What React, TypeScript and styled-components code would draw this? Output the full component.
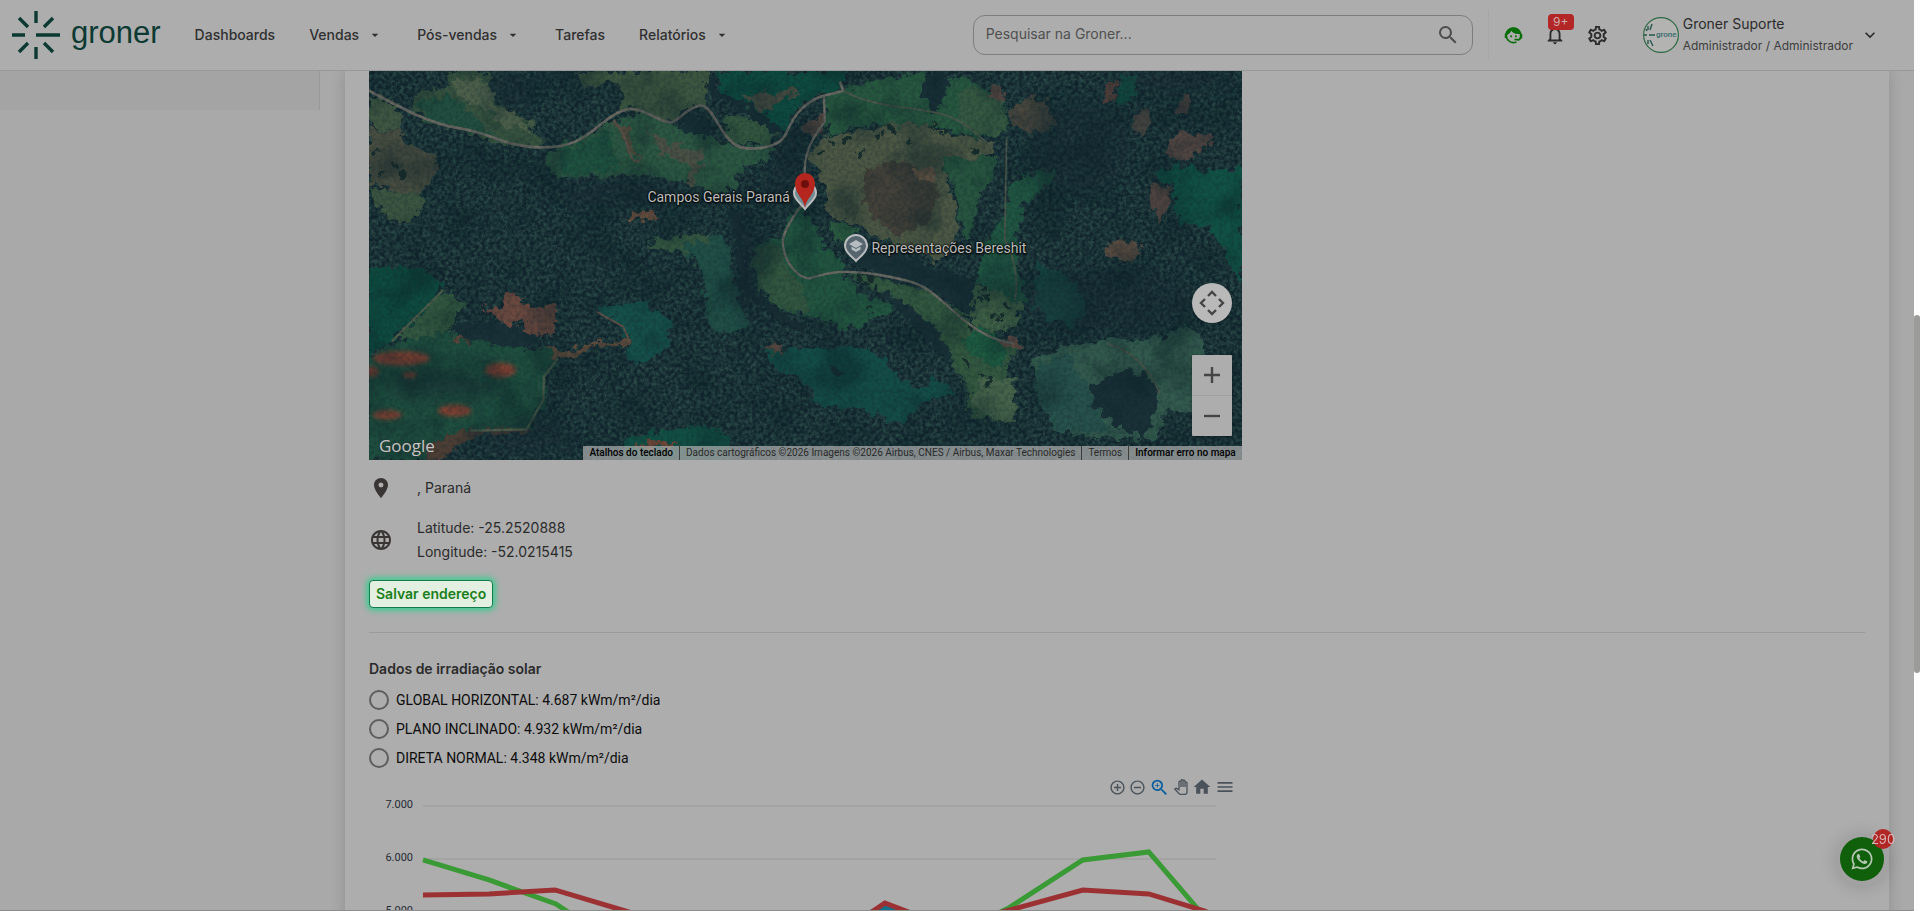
import React from "react";
import styled, { createGlobalStyle } from "styled-components";
import {
  MdAddCircleOutline,
  MdArrowDropDown,
  MdExpandMore,
  MdHome,
  MdLanguage,
  MdMenu,
  MdNotificationsNone,
  MdOutlinePanTool,
  MdOutlineSettings,
  MdPlace,
  MdRemoveCircleOutline,
  MdSearch,
  MdZoomIn,
} from "react-icons/md";
import { FaWhatsapp } from "react-icons/fa";

const c = {
  surface: "#adadad",
  page: "#a9a9a9",
  line: "#989898",
  text: "#2b2b2b",
  muted: "#4a4a4a",
  brand: "#0c3a33",
  green: "#117a11",
  red: "#b32626",
};

const GlobalStyle = createGlobalStyle`
  *, *::before, *::after { box-sizing: border-box; }
  body {
    margin: 0;
    background: ${c.page};
    color: ${c.text};
    font: 400 14px/24px Inter, "Liberation Sans", sans-serif;
  }
  button { font: inherit; color: inherit; background: none; border: 0; padding: 0; cursor: pointer; }
`;

const Screen = styled.div`
  display: flex;
  height: 100vh;
  overflow: hidden;
`;

const Shell = styled.div`
  flex: 1;
  min-width: 0;
  display: flex;
  flex-direction: column;
  border-bottom: 1px solid #8c8c8c;
`;

const ScrollTrack = styled.div`
  flex: 0 0 6px;
  display: grid;
  grid-template-rows: 315fr 358fr 238fr;
  background: #fdfdfd;
`;

const ScrollThumb = styled.div`
  grid-row: 2;
  border-radius: 3px;
  background: #9b9b99;
`;

const Header = styled.header`
  flex: 0 0 71px;
  display: flex;
  align-items: center;
  padding: 0 34px 0 12px;
  background: ${c.surface};
  border-bottom: 1px solid ${c.line};
`;

const Logo = styled.a`
  display: flex;
  align-items: center;
  gap: 11px;
  margin-right: 34px;
  color: ${c.brand};
  font: 400 31px/40px "Liberation Sans", sans-serif;
  text-decoration: none;

  span { padding-bottom: 4px; }
`;

const Nav = styled.nav`
  display: flex;
  gap: 34px;
`;

const NavItem = styled.button`
  display: flex;
  align-items: center;
  gap: 8px;
  font-weight: 500;
  font-size: 14px;
  line-height: 24px;
  color: #303030;
`;

const SearchBox = styled.form`
  flex: 0 1 500px;
  display: flex;
  align-items: center;
  height: 40px;
  margin: 0 15px 0 auto;
  padding: 0 12px;
  border: 1px solid #7d7d7d;
  border-radius: 12px;
  color: #4d4d4d;

  input {
    flex: 1;
    min-width: 0;
    padding: 0 0 2px;
    border: 0;
    background: none;
    font: inherit;
    color: inherit;
    outline: 0;
  }
  input::placeholder { color: #505050; opacity: 1; }
  button { display: flex; }
`;

const Tools = styled.div`
  display: flex;
  align-items: center;
  gap: 20px;
  height: 50px;
  padding: 0 34px 0 14px;
  border-left: 1px solid #a6a6a6;
  color: ${c.text};
`;

const ToolButton = styled.button<{ $accent?: boolean }>`
  position: relative;
  display: flex;
  color: ${(p) => (p.$accent ? "#0a6e0a" : "inherit")};
`;

const CountBadge = styled.span`
  position: absolute;
  left: 4px;
  top: -10px;
  width: 26px;
  border-radius: 4px;
  background: ${c.red};
  color: #d0abab;
  font-size: 12px;
  line-height: 16px;
`;

const Profile = styled.button`
  display: flex;
  align-items: center;
  gap: 4px;
  text-align: left;

  > :last-child { margin-left: 3px; }
`;

const ProfileText = styled.span<{ $small?: boolean }>`
  display: block;
  font-size: ${(p) => (p.$small ? 12 : 14)}px;
  line-height: 22px;
  color: ${(p) => (p.$small ? "#3c3c3c" : c.text)};
`;

const Body = styled.div`
  flex: 1;
  min-height: 0;
  display: flex;
  overflow: hidden;
`;

const Sidebar = styled.aside`
  flex: 0 0 320px;
  height: 39px;
  background: #a4a4a4;
  border-right: 1px solid #999;
`;

const Card = styled.main`
  flex: 1;
  min-width: 0;
  height: max-content;
  margin: 0 25px;
  padding: 0 24px;
  background: ${c.surface};
  box-shadow: 0 0 14px rgba(0, 0, 0, 0.16);
`;

const Column = styled.div`
  width: 58.34%;
`;

const MapFrame = styled.section`
  position: relative;
  height: 389px;
  overflow: hidden;
  background: #1d3639;

  > svg { display: block; width: 100%; height: 100%; }
`;

const Place = styled.div<{ $dx: number; $top: number }>`
  position: absolute;
  left: calc(50% + ${(p) => p.$dx}px);
  top: ${(p) => p.$top}px;
  display: flex;
  align-items: center;
  gap: 2px;
  color: #bdbdbd;
  font: 400 14px/20px Roboto, sans-serif;
  white-space: nowrap;
  text-shadow: 0 0 2px #000, 0 0 2px #000, 0 1px 2px #000;
`;

const GoogleMark = styled.span`
  position: absolute;
  left: 10px;
  bottom: 2px;
  color: #c4c4c4;
  font: 500 17px/24px "Open Sans", sans-serif;
  text-shadow: 0 0 2px #333;
`;

const MapControls = styled.div`
  position: absolute;
  right: 10px;
  bottom: 24px;
  display: flex;
  flex-direction: column;
  gap: 32px;
`;

const ControlGroup = styled.div<{ $round?: boolean }>`
  width: 40px;
  border-radius: ${(p) => (p.$round ? "50%" : "1px")};
  background: ${(p) => (p.$round ? "#b9b9b9" : "#adadad")};
  box-shadow: 0 1px 3px rgba(0, 0, 0, 0.35);

  button { display: block; height: 40px; }
  button + button { border-top: 1px solid #a0a0a0; height: 41px; }
  svg { display: block; }
`;

const Attribution = styled.div`
  position: absolute;
  right: 0;
  bottom: 0;
  display: flex;
  background: rgba(173, 173, 173, 0.72);
  color: #2a2a2a;
  font: 400 10px/14px Roboto, sans-serif;
  white-space: nowrap;

  > * { padding: 0 6px; color: inherit; text-decoration: none; }
  > * + * { border-left: 1px solid #3c3c3c; }
  > :first-child, > :last-child { color: #000; font-weight: 500; }
`;

const InfoRow = styled.div<{ $tall?: boolean }>`
  display: flex;
  align-items: center;
  gap: 24px;
  min-height: ${(p) => (p.$tall ? 56 : 48)}px;

  svg { color: #393535; }
`;

const SaveButton = styled.button`
  display: block;
  height: 28px;
  margin-top: 16px;
  padding: 0 6px;
  border: 1px solid #16794c;
  border-radius: 4px;
  background: #e3efe1;
  box-shadow: 0 0 6px 2px #2cd08e;
  color: #1a7f1a;
  font-weight: 600;
  line-height: 24px;
`;

const Rule = styled.hr`
  margin: 24px 0;
  border: 0;
  border-top: 1px solid #9b9b9b;
`;

const RadioSet = styled.fieldset`
  margin: 0;
  padding: 0;
  border: 0;

  legend { padding: 0; margin-bottom: 4px; font-weight: 600; }
`;

const RadioRow = styled.label`
  display: flex;
  align-items: center;
  gap: 7px;
  height: 29px;
  color: #0c0c0c;
  font-family: Roboto, sans-serif;

  input {
    appearance: none;
    width: 20px;
    height: 20px;
    margin: 0;
    border: 2px solid #5e5e5e;
    border-radius: 50%;
  }
`;

const ChartTools = styled.div`
  display: flex;
  justify-content: flex-end;
  align-items: center;
  gap: 3px;
  height: 22px;
  margin-top: 4px;
  padding-right: 7px;
  color: #4a525a;
`;

const ChartButton = styled.button<{ $active?: boolean }>`
  display: flex;
  color: ${(p) => (p.$active ? "#0a5f9e" : "inherit")};
`;

const Plot = styled.svg`
  display: block;
  width: 100%;
  font-family: Roboto, sans-serif;
`;

const Whats = styled.button`
  position: fixed;
  right: 36px;
  bottom: 30px;
  display: grid;
  place-items: center;
  width: 44px;
  height: 44px;
  border-radius: 50%;
  background: #0f5f0b;
  color: #b5c7b3;
  box-shadow: 0 0 0 4px #a2a2a2, 0 2px 16px 6px rgba(0, 0, 0, 0.12);
`;

const WhatsCount = styled.span`
  position: absolute;
  right: -9px;
  top: -8px;
  display: flex;
  justify-content: center;
  width: 20px;
  height: 20px;
  border-radius: 50%;
  background: ${c.red};
  color: #d6b6b6;
  font-size: 13px;
  line-height: 20px;
`;

const Rays = ({ size }: { size: number }) => (
  <svg width={size} height={size} viewBox="0 0 48 48" stroke="currentColor" strokeWidth="3.4" fill="none" aria-hidden>
    <path d="M24 0V12M24 36V48M0 24H13M24 24H48M7 7L16 16M41 7L32 16M7 41L16 32M41 41L32 32" />
  </svg>
);

const Agent = () => (
  <svg width="21" height="21" viewBox="0 0 24 24" fill="currentColor" aria-hidden>
    <path d="M9.500 6.340C8.600 8.500 6.900 10.300 4.700 11.200L2.500 10.200C3.400 6 7 2.500 12 2.500C16.800 2.500 20.400 6 21.200 10.200H17C13.900 10.200 11.200 8.700 9.500 6.340Z" />
    <path d="M18.72,14.76C19.07,13.91 19.26,13 19.26,12C19.26,11.28 19.15,10.59 18.96,9.95C18.31,10.1 17.63,10.18 16.92,10.18C13.86,10.18 11.15,8.67 9.5,6.34C8.61,8.5 6.91,10.26 4.77,11.22C4.73,11.47 4.73,11.74 4.73,12A7.27,7.27 0 0,0 12,19.27C13.05,19.27 14.06,19.04 14.97,18.63C15.54,19.72 15.8,20.26 15.78,20.26C14.14,20.81 12.87,21.08 12,21.08C9.58,21.08 7.27,20.13 5.57,18.42C4.53,17.38 3.76,16.11 3.33,14.73H2V10.18H3.09C3.93,6.04 7.6,2.92 12,2.92C14.4,2.92 16.71,3.87 18.42,5.58C19.69,6.84 20.54,8.45 20.89,10.18H22V14.73H21.94L18.38,18L13.08,17.4V15.73H17.91L18.72,14.76M9.27,11.77A1.14,1.14 0 1,1 9.26,11.77M14.72,11.77A1.14,1.14 0 1,1 14.71,11.77Z" />
  </svg>
);

const Avatar = () => (
  <svg width="36" height="36" viewBox="0 0 36 36" aria-hidden>
    <circle cx="18" cy="18" r="17.4" fill="#b3b3b1" stroke="#2f6a45" strokeWidth="1.2" />
    <g stroke="#28564f" strokeWidth="1.4" fill="none">
      <path d="M5 9V13M5 23V27M1 18H4M6 18H12M9 7L7 13M10 29L7 23M3 12L4 14" />
    </g>
    <text x="13" y="20" fontSize="8" fontWeight="500" fontFamily="Roboto, sans-serif" fill="#35696b">grone</text>
  </svg>
);

/* Land cover painted over the forest base: [fill, outline]. */
const fields: [string, string][] = [
  ["#37533f", "M160 110L200 95L265 80L270 33L385 33L390 90L440 150L515 185L520 220L560 245L520 262L440 256L330 215L200 180L150 155Z"],
  ["#224f3f", "M165 125L260 105L330 150L400 230L300 205L200 175Z"],
  ["#4d604a", "M275 60L370 60L420 140L510 190L515 215L430 195L380 150L300 110Z"],
  ["#3f5742", "M27 105L80 120L135 160L125 215L27 200Z"],
  ["#494e41", "M27 205L120 215L140 255L235 285L225 340L190 400L150 410L50 370L27 390Z"],
  ["#3b5540", "M40 385L150 400L190 400L185 450L150 490L90 480L40 410Z"],
  ["#3c5640", "M640 33L1045 33L1035 130L1000 135L940 185L900 190L820 145L785 150L790 90L740 65L680 80Z"],
  ["#2c5742", "M550 275L600 262L690 220L745 185L850 160L930 195L1050 225L1100 255L1230 258L1245 270L1190 320L1150 320L1120 390L1040 400L1000 370L880 345L700 350L600 355L560 320Z"],
  ["#1f523f", "M600 280L740 215L780 320L680 345L610 340Z"],
  ["#4a5044", "M960 260L1030 270L1040 300L1000 340L1010 380L980 370L985 310L900 280L860 190L880 220Z"],
  ["#0e4a3f", "M1070 33L1470 33L1440 90L1380 100L1310 145L1280 210L1240 200L1150 150L1080 90Z"],
  ["#454b41", "M1155 115L1200 95L1250 100L1300 80L1315 95L1260 130L1230 160L1180 145Z"],
  ["#33563f", "M1100 165L1180 175L1250 225L1230 250L1130 250L1095 215Z"],
  ["#27573f", "M1395 100L1450 90L1520 65L1690 42L1840 60L1900 95L1940 130L1940 225L1850 230L1700 195L1550 190L1400 225Z"],
  ["#355841", "M1800 100L1830 75L1900 100L1940 150L1935 225L1840 225L1790 170Z"],
  ["#534640", "M1335 190L1385 170L1395 200L1370 230L1330 220Z"],
  ["#4c5744", "M1345 295L1390 230L1500 215L1600 190L1700 195L1770 225L1850 230L1900 255L1870 300L1750 300L1770 390L1790 480L1790 560L1730 600L1600 550L1500 500L1410 470L1390 350Z"],
  ["#434139", "M1515 330L1600 300L1700 330L1740 400L1690 500L1600 530L1515 450Z"],
  ["#6c5746", "M1655 335L1700 318L1730 340L1720 358L1670 355Z"],
  ["#27553f", "M1745 295L1910 290L1900 350L1860 400L1840 500L1820 540L1800 490L1780 380Z"],
  ["#205541", "M1960 360L2100 325L2050 390L1980 440L1970 540L1975 640L2010 740L1920 715L1850 660L1870 560L1930 480L1945 400Z"],
  ["#225540", "M1320 440L1290 460L1260 530L1180 560L1185 640L1200 690L1260 745L1350 770L1430 790L1450 820L1600 745L1510 700L1450 650L1445 590L1390 560L1360 490Z"],
  ["#32563f", "M1180 560L1270 560L1275 620L1330 690L1350 765L1250 740L1190 680Z"],
  ["#2b5a40", "M1405 500L1440 485L1490 510L1480 545L1430 545Z"],
  ["#33583f", "M1450 640L1600 665L1700 690L1770 735L1900 830L1980 850L1940 920L1960 1090L1850 1070L1820 1040L1830 1000L1760 880L1720 800L1660 740L1550 690Z"],
  ["#3e5f45", "M1850 670L1920 700L1990 740L1960 790L1900 830L1830 770Z"],
  ["#1d5a40", "M1850 800L1940 850L1930 920L1850 900L1800 850Z"],
  ["#46634a", "M1860 960L1960 960L1965 1090L1880 1075L1830 1040Z"],
  ["#16504a", "M710 745L760 730L850 720L890 750L935 790L930 850L840 920L800 890L815 850L770 790Z"],
  ["#214f46", "M855 555L930 530L1080 525L1110 560L1115 640L1140 740L1175 790L1080 830L1045 800L1030 660L1000 590L930 570Z"],
  ["#345640", "M855 555L930 530L1060 525L1040 545L960 550L990 580L930 570Z"],
  ["#144d47", "M1210 870L1340 870L1535 860L1620 960L1690 990L1720 945L1785 1000L1680 1030L1630 1095L1480 1040L1380 1040L1330 960L1250 930Z"],
  ["#194c45", "M2030 610L2110 640L2170 700L2180 760L2140 800L2070 780L2025 740Z"],
  ["#115245", "M2380 340L2450 310L2540 335L2646 320L2646 660L2615 640L2600 570L2540 500L2460 490L2440 380Z"],
  ["#335a4d", "M2015 910L2100 860L2250 835L2400 835L2480 800L2530 830L2540 1060L2420 1050L2380 1140L2200 1130L2080 1110L2040 1020Z"],
  ["#27514b", "M2020 930L2120 880L2180 980L2250 1120L2080 1110L2040 1020Z"],
  ["#145044", "M2260 120L2290 40L2330 45L2320 100L2290 140Z"],
  ["#0e4a3e", "M27 625L150 615L250 670L200 740L90 840L27 890Z"],
  ["#32573f", "M110 835L255 685L310 740L270 800L240 850Z"],
  ["#1f4e3e", "M90 850L270 820L400 860L550 865L595 895L550 950L550 1020L500 1110L330 1110L200 1200L27 1200L27 900Z"],
  ["#125044", "M790 1140L900 1110L1010 1095L1080 1110L1130 1170L1100 1200L780 1200Z"],
];

const soils: [string, string][] = [
  ["#6d4a40", "M365 745L430 745L440 695L475 700L500 745L580 735L585 800L570 830L505 825L490 775L455 805L420 770Z"],
  ["#6c503e", "M790 475L850 450L888 460L885 480L830 482Z"],
  ["#5c4a3c", "M550 862L640 870L700 845L810 840L812 858L700 855L650 895L600 900Z"],
  ["#5d463a", "M265 825L330 840L310 850L270 845Z"],
  ["#6c5148", "M1925 840L1970 832L1990 865L1950 870Z"],
  ["#54463e", "M1215 860L1270 850L1280 875L1240 885Z"],
  ["#524642", "M2405 270L2450 220L2560 220L2560 240L2500 290L2440 300Z"],
  ["#4e4340", "M2450 130L2480 95L2500 120L2480 165L2450 160Z"],
  ["#454440", "M2310 190L2345 150L2375 160L2350 230Z"],
  ["#4e433f", "M2370 380L2420 370L2435 430L2400 490L2370 440Z"],
  ["#584b41", "M2235 560L2270 535L2340 550L2335 590L2300 615L2250 580Z"],
  ["#4a483f", "M1945 150L1990 115L2055 120L2090 190L2010 225L1960 190Z"],
  ["#544641", "M1890 110L1910 70L1935 110L1930 140Z"],
  ["#533f3a", "M2235 120L2240 60L2265 70L2260 130Z"],
  ["#4d4a3d", "M765 190L800 260L840 300L820 240L790 190Z"],
  ["#4d3f35", "M200 1160L330 1105L510 1100L500 1118L340 1130L240 1200L200 1200Z"],
  ["#6b4537", "M830 1150L900 1140L980 1158L830 1160Z"],
];

const groves = [
  "M945 180L975 150L1035 175L1050 225L1000 225Z",
  "M1680 110L1705 40L1770 38L1755 120L1725 165Z",
  "M2190 980L2300 925L2375 960L2390 1020L2360 1140L2280 1100L2200 1040Z",
  "M270 795L400 780L500 810L550 850L430 862L310 840Z",
  "M1480 560L1640 590L1760 640L1850 660L1830 770L1770 720L1700 680L1560 640L1480 600Z",
  "M1540 690L1650 740L1720 800L1780 880L1760 900L1660 790Z",
  "M1410 930L1440 925L1460 945L1430 950Z",
];

/* Broad shaded valleys: cx, cy, rx, ry. */
const shades: [number, number, number, number][] = [
  [780, 405, 190, 50],
  [2160, 260, 160, 140],
  [2250, 720, 260, 100],
  [1280, 330, 60, 130],
  [500, 1130, 160, 50],
  [2440, 60, 200, 40],
  [450, 90, 70, 60],
  [260, 980, 190, 40],
  [1160, 620, 40, 180],
];

const reds: [number, number, number, number][] = [
  [125, 895, 85, 22],
  [422, 930, 46, 22],
  [82, 1065, 44, 14],
  [284, 1052, 50, 18],
  [35, 935, 22, 16],
  [150, 945, 22, 10],
];

const trees: [number, number][] = [
  [1870, 685], [1882, 712], [1905, 765], [1925, 770], [1945, 742], [1860, 718], [1830, 800], [1820, 912], [1860, 950], [1885, 968],
  [1420, 245], [1455, 240], [1500, 275], [1560, 225], [1600, 208], [1650, 240], [1720, 195], [1752, 218], [1840, 270], [1380, 280],
  [1500, 655], [1520, 668], [1535, 655], [1530, 750], [817, 155], [1090, 248], [110, 325], [60, 345], [130, 340], [50, 270],
];

const Satellite = () => (
  <svg viewBox="27 33 2619 1167" preserveAspectRatio="xMidYMid slice" aria-hidden>
    <defs>
      <filter id="rough" x="0" y="0" width="1" height="1" colorInterpolationFilters="sRGB">
        <feTurbulence type="fractalNoise" baseFrequency="0.035" numOctaves="4" seed="4" />
        <feDisplacementMap in="SourceGraphic" scale="48" xChannelSelector="R" yChannelSelector="G" />
      </filter>
      <filter id="canopy" x="0" y="0" width="1" height="1" colorInterpolationFilters="sRGB">
        <feTurbulence type="fractalNoise" baseFrequency="0.09" numOctaves="3" seed="9" />
        <feColorMatrix values="0 0 0 0 0.05  0 0 0 0 0.12  0 0 0 0 0.16  3 0 0 0 -1.1" />
        <feComposite in2="SourceAlpha" operator="in" />
      </filter>
      <filter id="glints" x="0" y="0" width="1" height="1" colorInterpolationFilters="sRGB">
        <feTurbulence type="fractalNoise" baseFrequency="0.1" numOctaves="2" seed="21" />
        <feColorMatrix values="0 0 0 0 0.2  0 0 0 0 0.34  0 0 0 0 0.31  0 3 0 0 -1.2" />
        <feComposite in2="SourceAlpha" operator="in" />
      </filter>
      <filter id="mottle" x="0" y="0" width="1" height="1" colorInterpolationFilters="sRGB">
        <feTurbulence type="fractalNoise" baseFrequency="0.008" numOctaves="4" seed="31" />
        <feColorMatrix values="0 0 0 0 0.04  0 0 0 0 0.13  0 0 0 0 0.15  0 0 3 0 -1.3" />
        <feComposite in2="SourceAlpha" operator="in" />
      </filter>
      <filter id="haze"><feGaussianBlur stdDeviation="7" /></filter>
      <filter id="valley" x="-0.5" y="-0.5" width="2" height="2"><feGaussianBlur stdDeviation="26" /></filter>
    </defs>
    <rect x="27" y="33" width="2619" height="1167" fill="#20393c" />
    <rect x="27" y="33" width="2619" height="1167" filter="url(#glints)" opacity="0.6" />
    <rect x="27" y="33" width="2619" height="1167" filter="url(#canopy)" opacity="0.75" />
    <g filter="url(#rough)">
      <rect x="0" y="0" width="2660" height="1210" fill="none" />
      {fields.map(([fill, d]) => <path key={d} d={d} fill={fill} />)}
      {soils.map(([fill, d]) => <path key={d} d={d} fill={fill} />)}
      {groves.map((d) => <path key={d} d={d} fill="#1a3137" />)}
      {trees.map(([x, y]) => <circle key={`${x}-${y}`} cx={x} cy={y} r="9" fill="#182e2c" />)}
      <path d="M1045 50L1062 95L1150 140L1260 215" stroke="#172e34" strokeWidth="24" fill="none" />
      <path d="M1120 450C1155 560 1130 680 1180 710S1280 790 1330 800" stroke="#192f34" strokeWidth="26" fill="none" />
    </g>
    <g filter="url(#valley)" fill="#122a31" opacity="0.45">
      {shades.map(([x, y, rx, ry]) => <ellipse key={`${x}-${y}`} cx={x} cy={y} rx={rx} ry={ry} />)}
    </g>
    <g filter="url(#haze)" fill="#7f4032">
      {reds.map(([x, y, rx, ry]) => <ellipse key={`${x}-${y}`} cx={x} cy={y} rx={rx} ry={ry} />)}
    </g>
    <g fill="none" stroke="#6b6a63" strokeLinejoin="round">
      <path strokeWidth="8" d="M27 92C100 130 200 190 300 205S430 260 540 262S680 225 740 180S820 145 850 155S920 195 940 185S1000 130 1030 138S1080 220 1120 250S1240 262 1265 240S1290 150 1380 110L1450 92L1440 65" />
      <path strokeWidth="7" d="M1392 110L1395 185C1350 240 1330 290 1335 350" />
      <path strokeWidth="7" d="M1330 430Q1260 520 1270 560C1280 620 1320 655 1350 655C1400 640 1440 625 1560 645S1700 680 1760 735S1880 840 1960 850" />
      <path strokeWidth="5" stroke="#4d574b" d="M1450 92C1550 150 1700 140 1770 170S1850 230 1900 260M1940 230L1935 540C1970 600 1975 680 1965 720M2240 850Q2350 880 2400 1000" />
      <path strokeWidth="6" stroke="#5e5147" d="M760 180Q790 210 805 265T840 300M710 755L790 800L812 850" />
      <path strokeWidth="7" stroke="#4c5d4b" d="M95 845L250 690M595 895L552 950L550 1020L500 1108L330 1112" />
    </g>
    <rect x="27" y="33" width="2619" height="1167" filter="url(#mottle)" opacity="0.4" />
    <rect x="27" y="33" width="2619" height="1167" filter="url(#canopy)" opacity="0.22" />
  </svg>
);

const series = [
  { color: "#15708c", points: "450,130 516,110 582,130" },
  { color: "#3a9a35", points: "54,62 120,82 187,106 253,150 516,170 640,110 714,62 780,54 830,112 860,150" },
  { color: "#9c3133", points: "54,97 120,96 186,92 253,112 380,150 450,150 500,116 516,105 550,118 600,128 634,114 714,92 780,96 836,113 870,130" },
];

const PinIcon = () => (
  <svg width="28" height="40" viewBox="0 0 28 40" aria-hidden>
    <path d="M14 38C10 32 3 29 3 22A11 11 0 0 1 25 22C25 29 18 32 14 38Z" fill="#6f8d95" stroke="#bcbcbc" strokeWidth="2" />
    <path d="M14 37C13 27 4 24 4 12A10 10 0 0 1 24 12C24 24 15 27 14 37Z" fill="#b5271e" />
    <circle cx="14" cy="13" r="4" fill="#6e0f0c" />
  </svg>
);

const SchoolPin = () => (
  <svg width="26" height="30" viewBox="0 0 26 30" aria-hidden>
    <path d="M13 28C10 24 2 20 2 13A11 11 0 0 1 24 13C24 20 16 24 13 28Z" fill="#56646d" stroke="#b8bcbd" strokeWidth="2" />
    <path d="M13 7L6 11L13 15L20 11ZM8.500 13.500V16.500L13 19L17.500 16.500V13.500L13 16Z" fill="#b5bdc1" />
  </svg>
);

const navItems = [
  { label: "Dashboards" },
  { label: "Vendas", menu: true },
  { label: "Pós-vendas", menu: true },
  { label: "Tarefas" },
  { label: "Relatórios", menu: true },
];

const readings = [
  "GLOBAL HORIZONTAL: 4.687 kWm/m²/dia",
  "PLANO INCLINADO: 4.932 kWm/m²/dia",
  "DIRETA NORMAL: 4.348 kWm/m²/dia",
];

const chartTools = [
  { label: "Ampliar", icon: <MdAddCircleOutline size={17} /> },
  { label: "Reduzir", icon: <MdRemoveCircleOutline size={17} /> },
  { label: "Zoom", icon: <MdZoomIn size={21} />, active: true },
  { label: "Mover", icon: <MdOutlinePanTool size={16} /> },
  { label: "Início", icon: <MdHome size={20} /> },
  { label: "Menu", icon: <MdMenu size={20} /> },
];

export default function App() {
  return (
    <Screen>
      <GlobalStyle />
      <Shell>
        <Header>
          <Logo href="#"><Rays size={48} /><span>groner</span></Logo>
          <Nav>
            {navItems.map((item) => (
              <NavItem key={item.label}>
                {item.label}
                {item.menu && <MdArrowDropDown size={16} />}
              </NavItem>
            ))}
          </Nav>
          <SearchBox>
            <input aria-label="Pesquisar" placeholder="Pesquisar na Groner..." />
            <button type="button" aria-label="Buscar"><MdSearch size={24} /></button>
          </SearchBox>
          <Tools>
            <ToolButton $accent aria-label="Atendimento"><Agent /></ToolButton>
            <ToolButton aria-label="Notificações"><MdNotificationsNone size={22} /><CountBadge>9+</CountBadge></ToolButton>
            <ToolButton aria-label="Configurações"><MdOutlineSettings size={23} /></ToolButton>
          </Tools>
          <Profile>
            <Avatar />
            <span>
              <ProfileText>Groner Suporte</ProfileText>
              <ProfileText $small>Administrador / Administrador</ProfileText>
            </span>
            <MdExpandMore size={20} />
          </Profile>
        </Header>
        <Body>
          <Sidebar />
          <Card>
            <Column>
              <MapFrame>
                <Satellite />
                <Place $dx={-158} $top={116}>Campos Gerais Paraná</Place>
                <Place $dx={-14} $top={100}><PinIcon /></Place>
                <Place $dx={38} $top={162}><SchoolPin />Representações Bereshit</Place>
                <GoogleMark>Google</GoogleMark>
                <MapControls>
                  <ControlGroup $round>
                    <button aria-label="Controles da câmera">
                      <svg width="40" height="40" viewBox="0 0 40 40" fill="none" stroke="#454545" strokeWidth="2.400">
                        <path d="M16 13L20 9L24 13M16 27L20 31L24 27M13 16L9 20L13 24M27 16L31 20L27 24" />
                      </svg>
                    </button>
                  </ControlGroup>
                  <ControlGroup>
                    <button aria-label="Aumentar zoom">
                      <svg width="40" height="40" viewBox="0 0 40 40" stroke="#454545" strokeWidth="2.400"><path d="M12 20H28M20 12V28" /></svg>
                    </button>
                    <button aria-label="Diminuir zoom">
                      <svg width="40" height="40" viewBox="0 0 40 40" stroke="#454545" strokeWidth="2.400"><path d="M12 20H28" /></svg>
                    </button>
                  </ControlGroup>
                </MapControls>
                <Attribution>
                  <button>Atalhos do teclado</button>
                  <span>Dados cartográficos ©2026 Imagens ©2026 Airbus, CNES / Airbus, Maxar Technologies</span>
                  <a href="#termos">Termos</a>
                  <a href="#erro">Informar erro no mapa</a>
                </Attribution>
              </MapFrame>
            </Column>
            <InfoRow $tall><MdPlace size={24} /><span>, Paraná</span></InfoRow>
            <InfoRow><MdLanguage size={24} /><span>Latitude: -25.2520888<br />Longitude: -52.0215415</span></InfoRow>
            <SaveButton>Salvar endereço</SaveButton>
            <Rule />
            <RadioSet>
              <legend>Dados de irradiação solar</legend>
              {readings.map((r) => (
                <RadioRow key={r}><input type="radio" name="irradiacao" />{r}</RadioRow>
              ))}
            </RadioSet>
            <Column>
              <ChartTools>
                {chartTools.map((t) => (
                  <ChartButton key={t.label} $active={t.active} aria-label={t.label}>{t.icon}</ChartButton>
                ))}
              </ChartTools>
              <Plot viewBox="0 0 873 160" role="img" aria-label="Irradiação solar mensal">
                {["7.000", "6.000", "5.000"].map((label, i) => (
                  <g key={label}>
                    <path d={`M54 ${8 + i * 53}H847`} stroke="#9a9a9a" strokeWidth="1" />
                    <text x="44" y={10 + i * 53} fontSize="11" textAnchor="end" fill="#1f2a33">{label}</text>
                  </g>
                ))}
                {series.map((s) => (
                  <polyline key={s.color} points={s.points} fill="none" stroke={s.color} strokeWidth="5" />
                ))}
              </Plot>
            </Column>
          </Card>
        </Body>
      </Shell>
      <ScrollTrack><ScrollThumb /></ScrollTrack>
      <Whats aria-label="WhatsApp"><FaWhatsapp size={24} /><WhatsCount>290</WhatsCount></Whats>
    </Screen>
  );
}
